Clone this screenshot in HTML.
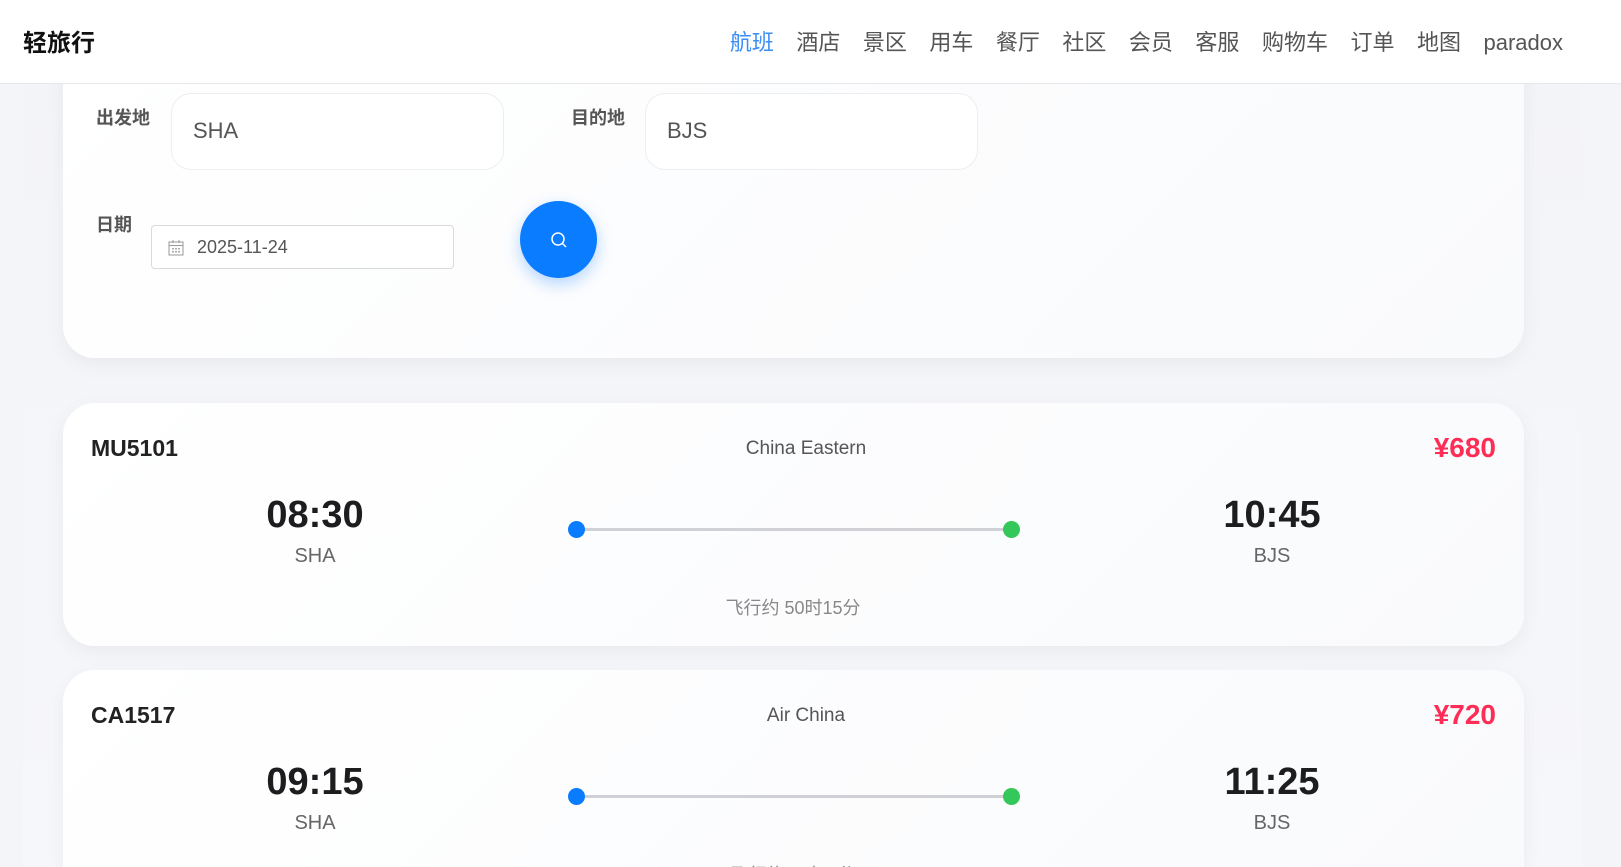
<!DOCTYPE html>
<html><head><meta charset="utf-8"><style>
*{box-sizing:border-box;margin:0;padding:0}
html,body{width:1621px;height:867px;overflow:hidden}
body{background:#f4f5f9;font-family:"Liberation Sans","Noto Sans CJK SC",sans-serif;position:relative}
.main{position:absolute;left:23px;top:0;width:1559px;height:867px;background:linear-gradient(180deg,#f3f4f8,#f6f7fa)}
.hdr{position:absolute;left:0;top:0;width:1621px;height:84px;background:#fff;border-bottom:1px solid #e8e9ee;z-index:5}
.logo{position:absolute;left:23px;top:23px;font-size:24px;font-weight:bold;color:#111}
.nav{position:absolute;right:58px;top:28px;font-size:22px;line-height:30px;color:#555;display:flex;align-items:baseline}
.nav span{margin-left:22.5px}
.nav span:first-child{color:#3a8ef6}
.card{position:absolute;left:63px;width:1461px;background:linear-gradient(135deg,#fff,#f9fafc);border-radius:32px;box-shadow:0 6px 20px rgba(0,0,0,.05);overflow:hidden}
.lab{position:absolute;font-size:18px;font-weight:bold;color:#555}
.inp{position:absolute;border:1px solid #eceef2;border-radius:20px;background:#fff;font-size:22px;color:#555;padding-left:21px;line-height:74px}
.date{position:absolute;left:151px;top:225px;width:303px;height:44px;border:1px solid #d8dae0;border-radius:4px;background:#fff;font-size:18px;color:#555;line-height:42px;padding-left:45px}
.btn{position:absolute;left:520px;top:201px;width:77px;height:77px;border-radius:50%;background:#0a7cff;box-shadow:0 6px 16px rgba(10,124,255,.3)}
.abs{position:absolute;white-space:nowrap}
.fn{font-size:23px;font-weight:bold;color:#222}
.air{font-size:19px;color:#555;transform:translateX(-50%)}
.pr{font-size:28px;font-weight:bold;color:#ff2d55;right:28px}
.tm{font-size:38px;font-weight:bold;color:#1d1d1f;transform:translateX(-50%)}
.cd{font-size:20px;color:#666;transform:translateX(-50%)}
.line{position:absolute;left:514px;width:434px;height:3px;background:#d0d1d6}
.dot{position:absolute;width:17px;height:17px;border-radius:50%}
.dur{font-size:18px;color:#888;transform:translateX(-50%)}
</style></head><body>
<div class="main"></div>
<div class="hdr"><div class="logo">轻旅行</div>
<div class="nav"><span>航班</span><span>酒店</span><span>景区</span><span>用车</span><span>餐厅</span><span>社区</span><span>会员</span><span>客服</span><span>购物车</span><span>订单</span><span>地图</span><span>paradox</span></div></div>
<div class="card" style="top:40px;height:318px"></div>
<div class="lab" style="left:96px;top:104px">出发地</div>
<div class="inp" style="left:171px;top:93px;width:333px;height:77px">SHA</div>
<div class="lab" style="left:571px;top:104px">目的地</div>
<div class="inp" style="left:645px;top:93px;width:333px;height:77px">BJS</div>
<div class="lab" style="left:96px;top:211px">日期</div>
<div class="date"><svg style="position:absolute;left:16px;top:13px" width="16" height="17" viewBox="0 0 16 17"><rect x="1" y="3" width="14" height="13" fill="none" stroke="#999"/><line x1="1" y1="6.5" x2="15" y2="6.5" stroke="#999"/><line x1="5" y1="1" x2="5" y2="4" stroke="#999"/><line x1="11" y1="1" x2="11" y2="4" stroke="#999"/><g fill="#aaa"><rect x="4" y="9" width="2" height="1.5"/><rect x="7" y="9" width="2" height="1.5"/><rect x="10" y="9" width="2" height="1.5"/><rect x="4" y="12" width="2" height="1.5"/><rect x="7" y="12" width="2" height="1.5"/><rect x="10" y="12" width="2" height="1.5"/></g></svg>2025-11-24</div>
<div class="btn"><svg style="position:absolute;left:30px;top:30px" width="18" height="18" viewBox="0 0 18 18"><circle cx="8" cy="8" r="6" fill="none" stroke="#fff" stroke-width="1.5"/><line x1="12.5" y1="12.5" x2="16" y2="16" stroke="#fff" stroke-width="1.5"/></svg></div>

<div class="card" style="top:403px;height:243px">
<div class="abs fn" style="left:28px;top:32px">MU5101</div>
<div class="abs air" style="left:743px;top:35px">China Eastern</div>
<div class="abs pr" style="top:29px">¥680</div>
<div class="abs tm" style="left:252px;top:91px">08:30</div>
<div class="abs cd" style="left:252px;top:142px">SHA</div>
<div class="line" style="top:125px"></div>
<div class="dot" style="left:505px;top:118px;background:#0a7cff"></div>
<div class="dot" style="left:940px;top:118px;background:#34c759"></div>
<div class="abs tm" style="left:1209px;top:91px">10:45</div>
<div class="abs cd" style="left:1209px;top:142px">BJS</div>
<div class="abs dur" style="left:730px;top:191px">飞行约 50时15分</div>
</div>

<div class="card" style="top:670px;height:197px;border-radius:32px 32px 0 0">
<div class="abs fn" style="left:28px;top:32px">CA1517</div>
<div class="abs air" style="left:743px;top:35px">Air China</div>
<div class="abs pr" style="top:29px">¥720</div>
<div class="abs tm" style="left:252px;top:91px">09:15</div>
<div class="abs cd" style="left:252px;top:142px">SHA</div>
<div class="line" style="top:125px"></div>
<div class="dot" style="left:505px;top:118px;background:#0a7cff"></div>
<div class="dot" style="left:940px;top:118px;background:#34c759"></div>
<div class="abs tm" style="left:1209px;top:91px">11:25</div>
<div class="abs cd" style="left:1209px;top:142px">BJS</div>
<div class="abs dur" style="left:730px;top:191px">飞行约 2时10分</div>
</div>
</body></html>
